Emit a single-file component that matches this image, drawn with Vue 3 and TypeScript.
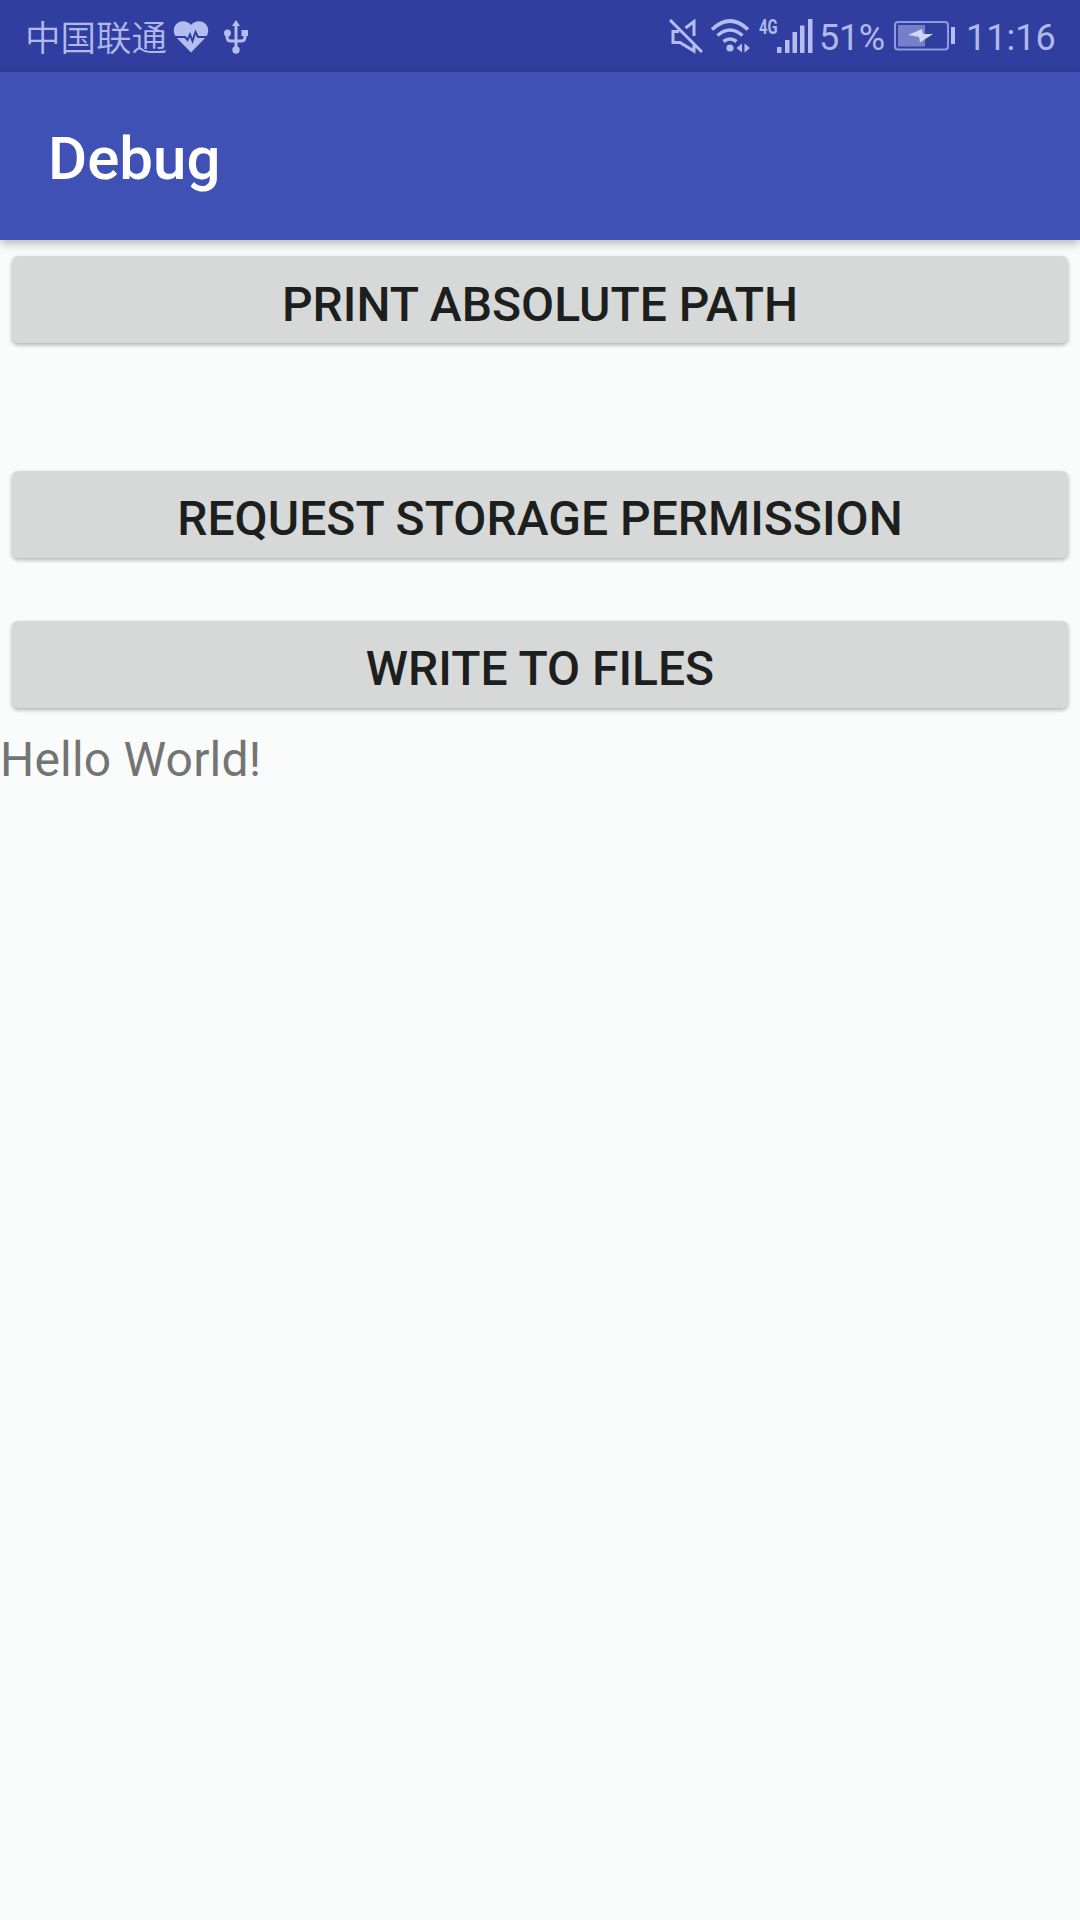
<script setup lang="ts">
interface Action {
  id: string
  label: string
}

const carrier = '中国联通'
const battery = 51
const clock = '11:16'
const title = 'Debug'

const actions: Action[] = [
  { id: 'path', label: 'PRINT ABSOLUTE PATH' },
  { id: 'permission', label: 'REQUEST STORAGE PERMISSION' },
  { id: 'write', label: 'WRITE TO FILES' },
]
</script>

<template>
  <div class="screen">
    <header class="status">
      <span class="carrier">{{ carrier }}</span>
      <svg class="heart" width="36" height="34" viewBox="0 0 36 34">
        <path class="fill" d="M18 4C14-.7 7-.8 3.400 3 -.4 7 .3 12.500 3.400 16.500L18 31.500 32.600 16.500C35.700 12.500 36.400 7 32.600 3 29-.8 22-.7 18 4Z" />
        <path class="pulse" d="M1 16H12L14.500 19 17 13.500 19.500 20 22.500 11 25 16H35" />
      </svg>
      <svg class="usb" width="24" height="34" viewBox="0 0 24 34">
        <path class="line" d="M12 4V30M3 13V17Q3 21 7 21H17Q21 21 21 17V13" />
        <path class="fill" d="M12 0 16 6H8ZM17.500 10H24V16H17.500Z" />
        <circle class="fill" cx="3.500" cy="13" r="3.500" />
        <circle class="fill" cx="12" cy="30" r="3.700" />
      </svg>
      <span class="spacer" />
      <svg class="mute" width="34" height="36" viewBox="0 0 34 36">
        <path class="line" d="M1 1 33 33M16.500 9 25 2.500V17M10 12.500H4V23.500H11L25 32V26" />
      </svg>
      <svg class="wifi" width="42" height="36" viewBox="0 0 42 36">
        <path class="arc" d="M2 11.500Q20 -5.500 38 11.500M7.500 17.500Q20 6.500 32.500 17.500M13.500 23.500Q20 18.500 26.500 23.500" />
        <circle class="fill" cx="20" cy="30" r="3.600" />
        <path class="fill" d="M26.500 30 32 25.500V34.500ZM40 30 34.500 25.500V34.500Z" />
      </svg>
      <span class="network">4G</span>
      <svg class="signal" width="36" height="34" viewBox="0 0 36 34">
        <path class="fill" d="M0 28H4.500V34H0ZM8 21H12.500V34H8ZM15.500 13H20V34H15.500ZM23 6.500H27.500V34H23ZM31 0H35.500V34H31Z" />
      </svg>
      <span class="percent">{{ battery }}%</span>
      <svg class="battery" width="62" height="30" viewBox="0 0 62 30">
        <rect class="case" x="1" y="1" width="53" height="27.500" rx="3" />
        <rect class="charge" x="4" y="4" width="27" height="21.500" />
        <path class="bolt" d="M14 14 28 8 29 13H39L26 21.500 25 16Z" />
        <path class="fill" d="M57 6H61V23H57Z" />
      </svg>
      <span class="clock">{{ clock }}</span>
    </header>

    <div class="appbar">
      <h1>{{ title }}</h1>
    </div>

    <main>
      <button v-for="action in actions" :key="action.id" type="button" :class="action.id">
        {{ action.label }}
      </button>
      <p>Hello World!</p>
    </main>
  </div>
</template>

<style>
body {
  background: #fafcfb;
}
</style>

<style scoped>
.screen {
  height: 1920px;
  overflow: hidden;
  background: #fafcfb;
  font-family: Roboto, "Noto Sans CJK SC", sans-serif;
}
.status {
  display: flex;
  align-items: flex-start;
  box-sizing: border-box;
  height: 72px;
  padding: 0 24px 0 25px;
  background: #303f9f;
  color: #b0b8ec;
}
.status svg {
  display: block;
  flex: none;
}
.fill {
  fill: #b5bdf0;
}
.bolt {
  fill: #d0d5fa;
}
.line,
.arc {
  fill: none;
  stroke: #b5bdf0;
  stroke-width: 3;
}
.arc {
  stroke-width: 3.6;
}
.pulse {
  fill: none;
  stroke: #303f9f;
  stroke-width: 2;
}
.case {
  fill: none;
  stroke: #8d99e0;
  stroke-width: 2;
}
.charge {
  fill: #7680c8;
}
.carrier {
  width: 148px;
  font: 350 35.500px/71px "Noto Sans CJK SC", sans-serif;
  white-space: nowrap;
}
.heart {
  margin-top: 21px;
}
.usb {
  margin: 20px 0 0 15px;
}
.spacer {
  flex: 1;
}
.mute {
  margin-top: 19px;
}
.wifi {
  margin: 18px 0 0 7px;
}
.network {
  width: 19px;
  margin: 16px 0 0 7px;
  font: 700 20px/22px Roboto, sans-serif;
  transform: scaleX(0.74);
  transform-origin: 0 0;
}
.signal {
  margin: 19px 0 0 -1px;
}
.percent {
  width: 66px;
  margin-left: 6px;
  font-size: 36px;
  letter-spacing: -0.3px;
  line-height: 76px;
}
.battery {
  margin: 21px 0 0 9px;
}
.clock {
  width: 90px;
  margin-left: 10px;
  font-size: 36px;
  line-height: 76px;
  white-space: nowrap;
}
.appbar {
  position: relative;
  display: flex;
  align-items: center;
  box-sizing: border-box;
  height: 168px;
  padding: 6px 48px 0;
  background: #3f51b5;
  box-shadow: 0 3px 10px rgba(0, 0, 0, 0.3);
}
h1 {
  margin: 0;
  color: #fff;
  font-size: 60px;
  font-weight: 500;
  line-height: 70px;
}
main {
  display: flex;
  flex-direction: column;
  padding: 16px 12px 0;
}
button {
  height: 87px;
  margin: 0;
  padding: 9px 0 0;
  border: 0;
  border-radius: 6px;
  background: #d7d9d8;
  box-shadow: 0 2px 4px rgba(0, 0, 0, 0.3);
  color: #1d1f1e;
  font: 500 48px/78px Roboto, sans-serif;
}
.path {
  padding-top: 10px;
}
.permission {
  margin-top: 128px;
  letter-spacing: 0.04px;
}
.write {
  margin-top: 63px;
}
p {
  margin: 24px 0 0 -12px;
  color: #737574;
  font-size: 48px;
  letter-spacing: 0.2px;
  line-height: 56px;
}
</style>
